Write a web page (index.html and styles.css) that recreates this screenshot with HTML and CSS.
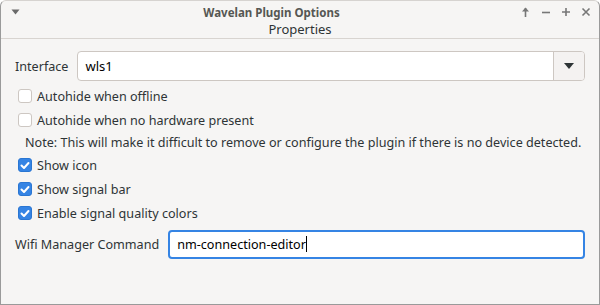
FILE: index.html
```html
<!DOCTYPE html>
<html lang="en">

<head>
    <meta charset="UTF-8">
    <meta name="viewport" content="width=device-width, initial-scale=1.0">
    <title>Wavelan Plugin Options</title>
    <link rel="stylesheet" href="styles.css">
</head>

<body>
    <div class="window">
        <div class="titlebar">
            <button class="title-btn menu-btn">
                <svg width="9" height="6" viewBox="0 0 9 6"><path d="M0.5 0.5h8L4.5 5.5z" fill="#6a6a6a"/></svg>
            </button>
            <div class="title">Wavelan Plugin Options</div>
            <div class="title-controls">
                <button class="title-btn">
                    <svg width="9" height="10" viewBox="0 0 9 10"><path d="M4.5 1v9" stroke="#777" stroke-width="1.6"/><path d="M1 4.5L4.5 0.5L8 4.5z" fill="#777"/></svg>
                </button>
                <button class="title-btn">
                    <svg width="10" height="10" viewBox="0 0 10 10"><path d="M1 5.5h8" stroke="#777" stroke-width="1.6"/></svg>
                </button>
                <button class="title-btn">
                    <svg width="10" height="10" viewBox="0 0 10 10"><path d="M1 5h8M5 1v8" stroke="#777" stroke-width="1.6"/></svg>
                </button>
                <button class="title-btn">
                    <svg width="10" height="10" viewBox="0 0 10 10"><path d="M1.5 1.5l7 7M8.5 1.5l-7 7" stroke="#777" stroke-width="1.6"/></svg>
                </button>
            </div>
        </div>
        <div class="tab-header">Properties</div>

        <div class="content">
            <div class="field-row">
                <label class="field-label">Interface</label>
                <div class="combo">
                    <div class="combo-value">wls1</div>
                    <div class="combo-button">
                        <svg width="10" height="6" viewBox="0 0 10 6"><path d="M0 0h10L5 6z" fill="#2e3436"/></svg>
                    </div>
                </div>
            </div>

            <label class="check-row">
                <span class="check"></span>
                <span>Autohide when offline</span>
            </label>
            <label class="check-row">
                <span class="check"></span>
                <span>Autohide when no hardware present</span>
            </label>
            <div class="note">Note: This will make it difficult to remove or configure the plugin if there is no device detected.</div>
            <label class="check-row">
                <span class="check checked"><svg width="10" height="9" viewBox="0 0 10 9"><path d="M1.5 4.5l2.5 2.5l4.5 -5" stroke="#fff" stroke-width="2" fill="none" stroke-linecap="round" stroke-linejoin="round"/></svg></span>
                <span>Show icon</span>
            </label>
            <label class="check-row">
                <span class="check checked"><svg width="10" height="9" viewBox="0 0 10 9"><path d="M1.5 4.5l2.5 2.5l4.5 -5" stroke="#fff" stroke-width="2" fill="none" stroke-linecap="round" stroke-linejoin="round"/></svg></span>
                <span>Show signal bar</span>
            </label>
            <label class="check-row">
                <span class="check checked"><svg width="10" height="9" viewBox="0 0 10 9"><path d="M1.5 4.5l2.5 2.5l4.5 -5" stroke="#fff" stroke-width="2" fill="none" stroke-linecap="round" stroke-linejoin="round"/></svg></span>
                <span>Enable signal quality colors</span>
            </label>

            <div class="field-row command-row">
                <label class="field-label">Wifi Manager Command</label>
                <div class="entry">nm-connection-editor<span class="caret"></span></div>
            </div>
        </div>
    </div>
</body>

</html>
```

FILE: styles.css
```css
html,
body {
    margin: 0;
    height: 100%;
}

body {
    font-family: 'Noto Sans', 'DejaVu Sans', sans-serif;
    font-size: 12.6px;
    color: #2e3436;
    background-color: #ffffff;
}

.window {
    box-sizing: border-box;
    height: 100%;
    display: flex;
    flex-direction: column;
    background-color: #f6f5f4;
    border: 1px solid #9a9a9a;
    border-top-color: #d6d3d0;
    border-radius: 6px 6px 0 0;
}

.titlebar {
    height: 22px;
    display: flex;
    align-items: center;
    padding: 0 4px 0 6px;
}

.title-btn {
    width: 19px;
    height: 18px;
    padding: 0;
    border: none;
    background: none;
    display: flex;
    align-items: center;
    justify-content: center;
}

.menu-btn {
    width: 16px;
}

.title {
    flex: 1;
    text-align: center;
    font-size: 11.5px;
    font-weight: bold;
    color: #555753;
    padding-left: 4px;
}

.title-controls {
    display: flex;
    gap: 1px;
}

.tab-header {
    height: 15px;
    line-height: 13px;
    font-size: 13px;
    text-align: center;
    border-bottom: 1px solid #d8d4d0;
}

.content {
    padding: 12px 14px 0 14px;
    display: flex;
    flex-direction: column;
}

.field-row {
    display: flex;
    align-items: center;
    gap: 9px;
}

.field-label {
    color: #2e3436;
}

.combo {
    flex: 1;
    height: 30px;
    box-sizing: border-box;
    display: flex;
    border: 1px solid #cdc7c2;
    border-radius: 4px;
    background-color: #ffffff;
    overflow: hidden;
}

.combo-value {
    flex: 1;
    padding-left: 7px;
    line-height: 28px;
    font-size: 13px;
    color: #000000;
}

.combo-button {
    width: 30px;
    border-left: 1px solid #cdc7c2;
    background-color: #f4f2f1;
    display: flex;
    align-items: center;
    justify-content: center;
}

.check-row {
    height: 24px;
    display: flex;
    align-items: center;
    gap: 5px;
    padding-left: 3px;
}

.check-row:first-of-type {
    margin-top: 3px;
}

.check {
    width: 14px;
    height: 14px;
    box-sizing: border-box;
    border: 1px solid #cdc7c2;
    border-radius: 3px;
    background-color: #ffffff;
    display: flex;
    align-items: center;
    justify-content: center;
}

.check.checked {
    background-color: #3584e4;
    border-color: #2a76d2;
}

.note {
    height: 21px;
    line-height: 21px;
    padding-left: 10px;
    white-space: nowrap;
}

.command-row {
    margin-top: 5px;
}

.entry {
    flex: 1;
    height: 29px;
    box-sizing: border-box;
    border: 2px solid #3584e4;
    border-radius: 4px;
    background-color: #ffffff;
    padding-left: 7px;
    line-height: 25px;
    color: #000000;
}

.caret {
    display: inline-block;
    width: 1px;
    height: 16px;
    background-color: #000000;
    vertical-align: -3px;
}
```
